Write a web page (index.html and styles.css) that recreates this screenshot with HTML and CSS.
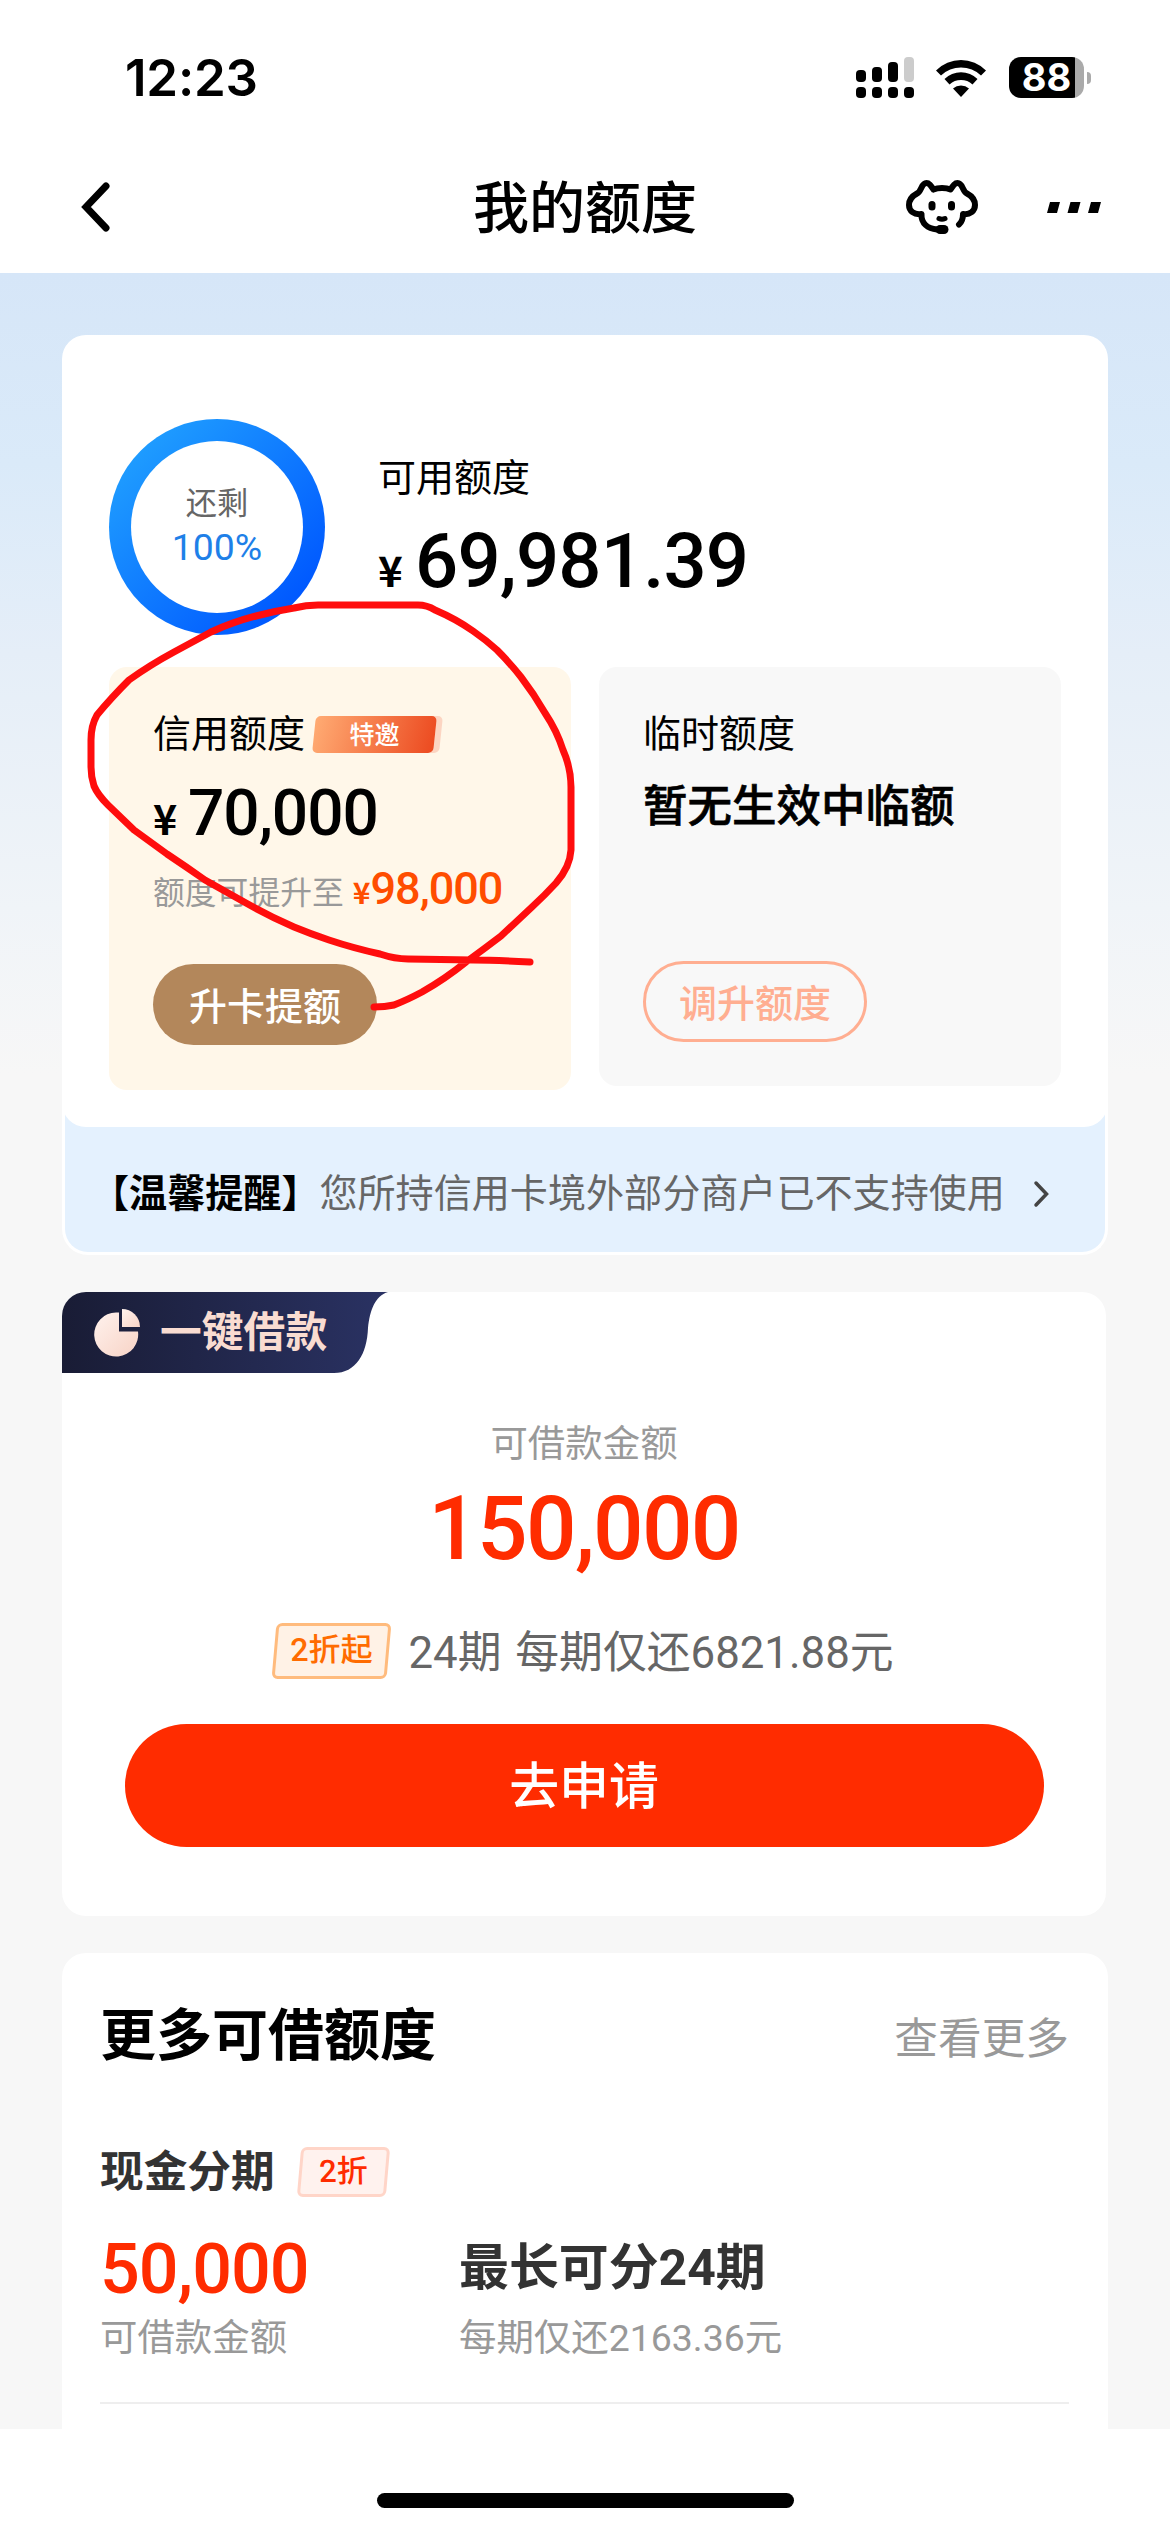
FILE: index.html
```html
<!DOCTYPE html>
<html lang="zh-CN">
<head>
<meta charset="utf-8">
<title>我的额度</title>
<link rel="stylesheet" href="styles.css">
</head>
<body>
<div class="screen">
  <div class="status">
    <span class="time">12:23</span>
    <div class="status-icons">
      <svg class="signal" width="58" height="41" viewBox="0 0 58 41"><g fill="#000"><rect y="13" width="10" height="12" rx="4"/><rect x="16" y="10" width="10" height="15" rx="4"/><rect x="32" y="5" width="10" height="20" rx="4"/><rect y="30" width="10" height="11" rx="4"/><rect x="16" y="30" width="10" height="11" rx="4"/><rect x="32" y="30" width="10" height="11" rx="4"/><rect x="48" y="30" width="10" height="11" rx="4"/></g><rect x="48" width="10" height="25" rx="4" fill="#ccc"/></svg>
      <svg class="wifi" width="50" height="38" viewBox="0 0 50 38"><path d="M0 11.500A35 35 0 0 1 50 11.500L45 16.500A29 29 0 0 0 5 16.500Z"/><path d="M8.500 20A23.500 23.500 0 0 1 41.500 20L36.500 25.500A17 17 0 0 0 13.500 25.500Z"/><path d="M17 29.500A12 12 0 0 1 33 29.500L25 38Z"/></svg>
      <div class="battery"><span>88</span></div><div class="nub"></div>
    </div>
  </div>
  <div class="navbar">
    <svg class="back" width="34" height="54" viewBox="0 0 34 54"><path d="M28 6L8 27L28 48"/></svg>
    <h1>我的额度</h1>
    <div class="nav-actions">
      <svg width="72" height="54" viewBox="0 0 72 54" fill="none" stroke="#000" stroke-width="6" stroke-linecap="round" stroke-linejoin="round"><path d="M27.500 9.500C24.500 5 23 3 20.500 3C15 3 16 11 11 13.500C5.500 16.500 3 19.500 3 25C3 31 8 35 15.500 34C15 44 22 48.500 31 49.500M27.500 9.500C32 7.500 40 7.500 44.500 9.500C47.500 5 49 3 51.500 3C57 3 56 11 61 13.500C66.500 16.500 69 19.500 69 25C69 31 64 35 57 34C57 39 56 42 53 44.500"/><path d="M33 38.500C35 39.500 37 39.500 39 38.500" stroke-width="5"/><g fill="#000" stroke="none"><rect x="22.500" y="21" width="7" height="9.500" rx="3.500"/><rect x="42" y="21" width="7" height="9.500" rx="3.500"/><rect x="29.500" y="45" width="13" height="9" rx="4.500"/></g></svg>
      <svg width="54" height="11" viewBox="0 0 54 11"><path d="M3 0H13L10 11H0ZM23.500 0H33.500L30.500 11H20.500ZM44 0H54L51 11H41Z"/></svg>
    </div>
  </div>
  <main>
    <section class="card quota">
      <div class="summary">
        <div class="ring"><div class="ring-in"><span>还剩</span><b>100%</b></div></div>
        <div class="avail"><span class="label">可用额度</span><div class="money big"><i>¥</i>69,981.39</div></div>
      </div>
      <div class="pair">
        <div class="box credit">
          <div class="label">信用额度<span class="invite"><em>特邀</em></span></div>
          <div class="money mid"><i>¥</i>70,000</div>
          <div class="raise">额度可提升至<span><i>¥</i>98,000</span></div>
          <button class="pill brown">升卡提额</button>
        </div>
        <div class="box temp">
          <div class="label">临时额度</div>
          <div class="none">暂无生效中临额</div>
          <button class="pill ghost">调升额度</button>
        </div>
      </div>
      <svg class="mark" width="500" height="420" viewBox="80 595 500 420"><path d="M530 962C511 961 492 960 473 960L408 959C398 959 389 957 380 954Q353 948 329 940Q311 934 294 927C278 920 262 912 246 903L205 880Q185 866 167 854L134 830L108 805C101 798 97 793 94 786Q91 777 91 767V740C91 731 93 722 97 715Q111 698 129 680Q150 665 174 652L211 632Q233 622 256 616Q275 611 294 608Q306 605 318 605H418Q427 605 435 610Q456 619 473 631Q486 640 497 650Q510 663 521 677Q534 694 545 713Q557 731 563 750Q571 768 571 787V850Q570 867 556 883Q545 895 532 907L501 936Q484 949 466 962Q445 979 422 992Q407 1000 394 1005Q385 1007 374 1007"/></svg>
    </section>
    <div class="notice"><strong>【温馨提醒】</strong><span>您所持信用卡境外部分商户已不支持使用</span><svg width="20" height="30" viewBox="0 0 20 30"><path d="M4 4L14.500 15L4 26"/></svg></div>
    <section class="card loan">
      <div class="tab">
        <svg class="tab-bg" width="326" height="81" viewBox="0 0 326 81"><defs><linearGradient id="navy"><stop stop-color="#191c35"/><stop offset="1" stop-color="#2a3263"/></linearGradient></defs><path fill="url(#navy)" d="M0 0H326C313 4 308 18 306 36C305 62 294 81 272 81H0Z"/></svg>
        <svg class="pie" width="46" height="48" viewBox="0 0 46 48"><defs><linearGradient id="rose" x2="1" y2="1"><stop stop-color="#fff2ed"/><stop offset="1" stop-color="#f7d3c6"/></linearGradient></defs><g fill="url(#rose)"><path d="M25 3.500V22.500H44A22 22 0 1 1 22 3.500Z"/><path d="M28 0A18 18 0 0 1 46 18H28Z"/></g></svg>
        <span>一键借款</span>
      </div>
      <div class="cap">可借款金额</div>
      <div class="amount">150,000</div>
      <div class="plan"><span class="tag orange"><em>2折起</em></span><span class="plan-text">24期 每期仅还6821.88元</span></div>
      <button class="apply">去申请</button>
    </section>
    <section class="card more">
      <div class="more-head"><h2>更多可借额度</h2><span>查看更多</span></div>
      <div class="prod"><h3>现金分期</h3><span class="tag red"><em>2折</em></span></div>
      <div class="cols">
        <div><div class="fig">50,000</div><div class="sub">可借款金额</div></div>
        <div><div class="term">最长可分24期</div><div class="sub">每期仅还2163.36元</div></div>
      </div>
    </section>
  </main>
  <footer><div class="home"></div></footer>
</div>
</body>
</html>
```
FILE: styles.css
```css
* { box-sizing: border-box; margin: 0; padding: 0; }
body { font-family: Roboto, "Noto Sans CJK SC", sans-serif; background: #fff; color: #000; }
i, em { font-style: normal; }
button { font: inherit; border: 0; display: flex; align-items: center; justify-content: center; }
svg { display: block; flex: none; }
.screen { width: 1170px; height: 2532px; overflow: hidden; display: flex; flex-direction: column; }

.status { height: 155px; flex: none; padding: 0 79px 0 125px; display: flex; justify-content: space-between; align-items: center; }
.time { font: 600 51px/60px Inter, sans-serif; letter-spacing: -0.2px; }
.status-icons { display: flex; align-items: center; }
.wifi { margin-left: 22px; }
.battery { margin-left: 23px; width: 75px; height: 41px; border-radius: 12px; background: linear-gradient(90deg, #000 66px, #aaa 66px); color: #fff; display: flex; align-items: center; justify-content: center; font: 700 38px/41px Inter, sans-serif; }
.nub { width: 4px; height: 12px; margin-left: 3px; border-radius: 0 6px 6px 0; background: #aaa; }

.navbar { height: 118px; flex: none; display: grid; grid-template-columns: 1fr auto 1fr; align-items: start; }
.back { margin: 25px 0 0 78px; fill: none; stroke: #000; stroke-width: 7; stroke-linecap: round; stroke-linejoin: miter; }
.navbar h1 { font-size: 56px; font-weight: 500; line-height: 60px; margin-top: 24px; }
.nav-actions { display: flex; justify-content: flex-end; align-items: center; gap: 69px; padding-right: 69px; margin-top: 25px; }

main { flex: none; height: 2156px; overflow: hidden; padding: 62px 62px 0; background: linear-gradient(#d6e6f8, #daeaf9 190px, #e5eef8 380px, #f0f4f8 635px, #f7f7f7 800px); }
.card { background: #fff; border-radius: 24px; }
.label { font-size: 38px; line-height: 44px; }
.money { font-weight: 500; display: flex; align-items: baseline; }
.money i { font-family: "Noto Sans CJK SC", sans-serif; font-weight: 700; line-height: 1; }

.quota { position: relative; z-index: 1; width: 1046px; height: 792px; padding: 84px 47px 0; }
.summary { display: flex; height: 248px; }
.ring { width: 216px; height: 216px; border-radius: 50%; background: linear-gradient(135deg, #1e9bff 15%, #0059ff 85%); padding: 22px; }
.ring-in { height: 172px; border-radius: 50%; background: #fff; display: flex; flex-direction: column; align-items: center; padding-top: 42px; }
.ring-in span { font-size: 31.2px; line-height: 42px; color: #666; }
.ring-in b { font-size: 37.4px; line-height: 44px; font-weight: 400; color: #1e80e8; }
.avail { padding: 37px 0 0 53px; }
.big { font-size: 76px; line-height: 90px; margin-top: 16px; letter-spacing: -0.8px; }
.big i { font-size: 42px; margin-right: 13px; }
.pair { display: flex; gap: 28px; align-items: flex-start; }
.box { width: 462px; border-radius: 18px; padding: 45px 44px 0; }
.credit { height: 423px; background: #fff7e9; }
.temp { height: 419px; background: #f8f8f8; }
.box .label { display: flex; align-items: center; }
.invite { width: 121px; height: 37px; margin-left: 9px; transform: skewX(-6deg); border-radius: 5px; background: linear-gradient(100deg, #ffab73, #ec4a20); box-shadow: 6px 0 0 #fcd5c2; color: #fff; font-size: 25px; font-weight: 500; line-height: 39px; text-align: center; }
.invite em, .tag em { display: block; transform: skewX(6deg); }
.mid { font-size: 64px; line-height: 76px; margin-top: 20px; letter-spacing: -1.1px; }
.mid i { font-size: 41px; margin-right: 12px; }
.raise { display: flex; align-items: baseline; font-size: 31.8px; line-height: 48px; margin-top: 13px; color: #999; white-space: nowrap; }
.raise span { font-size: 45px; font-weight: 500; color: #ff4d00; margin-left: 9px; letter-spacing: -1px; }
.raise i { font: 700 30px/1 "Noto Sans CJK SC", sans-serif; margin-right: 1px; }
.pill { width: 224px; height: 81px; border-radius: 41px; font-size: 38px; font-weight: 500; padding-bottom: 3px; }
.brown { background: #b3875b; color: #fff; margin-top: 47px; }
.ghost { background: none; border: 3px solid #ffae91; color: #ffae91; margin-top: 128px; }
.none { font-size: 44.5px; font-weight: 500; line-height: 52px; margin-top: 25px; white-space: nowrap; -webkit-text-stroke: 0.6px #000; }
.mark { position: absolute; left: 18px; top: 260px; fill: none; stroke: #ff0d0d; stroke-width: 7; stroke-linecap: round; stroke-linejoin: round; }

.notice { height: 152px; margin-top: -24px; border: 3px solid #fff; border-top: 0; border-radius: 0 0 26px 26px; background: #e4f1fe; padding: 69px 0 0 26px; display: flex; font-size: 38.1px; line-height: 44px; color: #666; white-space: nowrap; }
.notice strong { color: #000; font-weight: 700; }
.notice svg { margin: 7px 0 0 27px; fill: none; stroke: #444; stroke-width: 3.5; stroke-linecap: round; }

.loan { width: 1044px; height: 624px; margin-top: 37px; overflow: hidden; display: flex; flex-direction: column; align-items: center; }
.tab { align-self: flex-start; width: 326px; height: 81px; position: relative; display: flex; align-items: center; padding-left: 32px; }
.tab-bg { position: absolute; left: 0; top: 0; }
.pie { position: relative; }
.tab span { position: relative; margin-left: 20px; font-size: 41.8px; font-weight: 700; line-height: 50px; color: #f9dcd1; }
.cap { font-size: 37.44px; line-height: 44px; color: #999; margin-top: 49px; }
.amount { font-size: 89px; line-height: 100px; font-weight: 500; color: #ff2c00; margin-top: 13px; letter-spacing: -1.7px; }
.plan { display: flex; align-items: center; height: 56px; margin-top: 44px; font-size: 43.8px; color: #666; gap: 19px; }
.plan-text { padding-bottom: 5px; word-spacing: 3px; }
.tag { transform: skewX(-5deg); border: 3px solid; border-radius: 6px; font-weight: 500; text-align: center; }
.orange { width: 115px; height: 56px; line-height: 49px; font-size: 32px; color: #ff6c00; border-color: #ffbb7d; background: #fff2e6; }
.apply { width: 919px; height: 123px; border-radius: 62px; background: #ff2c00; color: #fff; font-size: 49.9px; font-weight: 500; margin-top: 45px; padding-bottom: 8px; }

.more { width: 1046px; height: 600px; margin-top: 37px; padding: 47px 39px 0 38px; }
.more-head { display: flex; justify-content: space-between; align-items: center; height: 70px; }
.more h2 { font-size: 56px; font-weight: 700; line-height: 66px; padding-top: 2px; }
.more-head span { font-size: 43.68px; color: #999; }
.prod { display: flex; align-items: center; margin-top: 74px; height: 56px; }
.more h3 { font-size: 43.68px; font-weight: 700; color: #333; padding-bottom: 8px; }
.red { width: 89px; height: 50px; line-height: 44px; font-size: 31px; color: #ff2c00; border-color: #ffd5c8; background: #fff2ee; margin-left: 24px; }
.cols { display: grid; grid-template-columns: 359px auto; margin-top: 27px; height: 177px; border-bottom: 2px solid #eee; }
.fig, .term { height: 84px; margin-bottom: 5px; white-space: nowrap; }
.fig { line-height: 84px; font-size: 70px; font-weight: 500; color: #ff2c00; letter-spacing: -1px; }
.term { line-height: 82px; font-size: 49.9px; font-weight: 700; color: #333; }
.sub { font-size: 37.44px; line-height: 44px; color: #999; white-space: nowrap; }
footer { height: 103px; background: #fff; padding: 64px 0 0 377px; }
.home { width: 417px; height: 15px; border-radius: 8px; background: #000; }
```
